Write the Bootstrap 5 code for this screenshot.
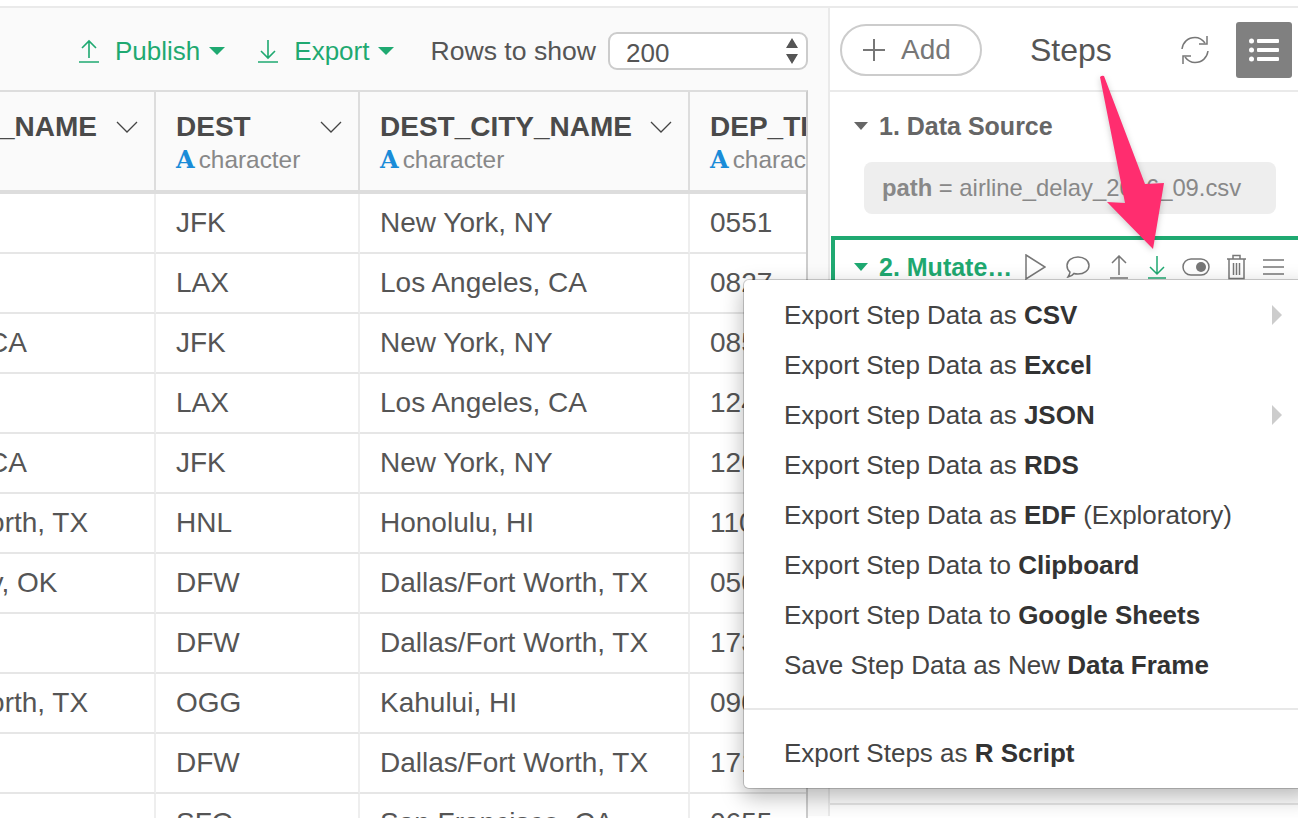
<!DOCTYPE html>
<html lang="en">
  <head>
    <meta charset="UTF-8" />
    <title>Steps - Export</title>
    <link href="https://cdn.jsdelivr.net/npm/bootstrap@5.3.0/dist/css/bootstrap.min.css" rel="stylesheet" />
    <style>
      body {
        font-family: "Liberation Sans", Arial, sans-serif;
        font-size: 26px;
        color: #555;
        background: #fff;
        height: 818px;
        overflow: hidden;
      }
      .app-shell { margin-top: 6px; border-top: 2px solid #eaeaea; height: 810px; }

      /* left pane */
      .data-pane { width: 830px; flex: none; background: #fafafa; border-right: 2px solid #eaeaea; }
      .data-toolbar { height: 82px; padding: 4px 20px 0 0; }
      .tool-link { color: #1fa971; text-decoration: none; }
      .tool-link svg { margin-right: 16px; }
      .tool-link + .tool-link { margin-left: 33px; }
      .tool-caret { width: 0; height: 0; margin-left: 9px; border-left: 8px solid transparent; border-right: 8px solid transparent; border-top: 8px solid #1fa971; }
      .rows-label { margin-left: 36px; margin-right: 12px; padding-top: 1px; font-size: 26.6px; }
      .rows-select {
        width: 200px; height: 38px; padding: 0 16px 2px;
        font-size: 26px; color: #555;
        border: 2px solid #ccc; border-radius: 9px;
        background-size: 14px 26px; background-position: right 7px center;
        background-image: url("data:image/svg+xml,%3Csvg xmlns='http://www.w3.org/2000/svg' viewBox='0 0 14 26'%3E%3Cpath fill='%23555' d='M7 0l6 10H1zM7 26L1 16h12z'/%3E%3C/svg%3E");
      }
      .grid-wrap { width: 808px; height: 728px; overflow: hidden; background: #fff; border-top: 2px solid #ddd; border-right: 2px solid #ccc; }
      .data-grid { width: 1190px; margin: 0 0 0 -200px; table-layout: fixed; border-collapse: separate; border-spacing: 0; --bs-table-bg: transparent; }
      .data-grid th {
        height: 102px; padding: 18px 16px 0 20px; vertical-align: top;
        background: #fafafa; border-bottom: 4px solid #ddd; border-right: 2px solid #ddd;
        font-size: 28px; font-weight: 700; line-height: 34px; color: #4a4a4a; white-space: nowrap;
      }
      .data-grid td {
        height: 60px; padding: 0 0 0 20px; vertical-align: middle;
        border-bottom: 2px solid #e6e6e6; border-right: 2px solid #eee;
        font-size: 28px; color: #555; white-space: nowrap; overflow: hidden;
      }
      .type-line { font-size: 24.4px; font-weight: 400; line-height: 32px; color: #888; }
      .type-glyph { font-family: "DejaVu Serif", serif; font-weight: 700; font-size: 24px; line-height: 1; color: #1a8cd8; margin-right: 4px; }

      /* right pane */
      .steps-pane { flex: 1; min-width: 0; }
      .steps-head { height: 84px; padding: 2px 0 0 10px; border-bottom: 2px solid #eaeaea; }
      .add-pill { width: 142px; height: 52px; padding: 0 8px 0 0; border: 2px solid #ccc; border-radius: 26px; color: #777; font-size: 28px; }
      .steps-title { font-size: 32px; color: #555; margin-left: 48px; margin-right: 68px; }
      .list-toggle { width: 56px; height: 56px; margin-left: 26px; border-radius: 3px; background: #808080; }
      .step-title { font-size: 25px; font-weight: 700; color: #666; line-height: 32px; }
      .step-caret { width: 0; height: 0; margin-right: 11px; border-left: 7px solid transparent; border-right: 7px solid transparent; border-top: 8px solid #666; }
      .source-step { padding: 18px 0 0 24px; height: 144px; }
      .path-box { width: 412px; height: 52px; margin: 20px 0 0 10px; padding-left: 18px; background: #eee; border-radius: 8px; font-size: 23.8px; line-height: 52px; color: #888; white-space: nowrap; }
      .active-step { margin-left: 1px; height: 545px; padding: 11px 0 0 19px; border-top: 4px solid #1fa971; border-left: 4px solid #1fa971; }
      .active-step .step-title { color: #1fa971; }
      .active-step .step-caret { border-top-color: #1fa971; }
      .step-name { width: 155px; white-space: nowrap; }
      .step-tail { margin-top: 22px; border-top: 2px solid #e6e6e6; }
      .icon-wide { margin-right: 4px; }

      /* export menu */
      .export-menu {
        left: 743px; top: 279px; width: 570px; padding: 10px 0;
        border: 1px solid rgba(0, 0, 0, 0.18); border-radius: 6px;
        box-shadow: 0 8px 22px rgba(0, 0, 0, 0.28);
        font-size: 26px;
      }
      .export-menu .dropdown-item { height: 50px; line-height: 50px; padding: 0 0 0 40px; color: #444; position: relative; }
      .export-menu .dropdown-item b { color: #333; }
      .export-menu .dropdown-divider { margin: 18px 0; border-top: 2px solid #e8e8e8; opacity: 1; }
      .sub-arrow { position: absolute; left: 528px; top: 15px; width: 0; height: 0; border-top: 10px solid transparent; border-bottom: 10px solid transparent; border-left: 10px solid #ccc; }
      .pink-arrow { position: absolute; left: 0; top: 0; pointer-events: none; filter: drop-shadow(0 2px 3px rgba(0, 0, 0, 0.2)); }
    </style>
  </head>
  <body>
    <div class="app-shell d-flex">
      <!-- data table -->
      <div class="data-pane">
        <div class="data-toolbar d-flex align-items-center justify-content-end">
          <a class="tool-link d-flex align-items-center" href="#">
            <svg width="20" height="24" viewBox="0 0 20 24" fill="none" stroke="#1fa971" stroke-width="1.6"><path d="M10 19V2M3 9l7-7 7 7M0 23h20" /></svg>
            Publish<span class="tool-caret"></span>
          </a>
          <a class="tool-link d-flex align-items-center" href="#">
            <svg width="20" height="24" viewBox="0 0 20 24" fill="none" stroke="#1fa971" stroke-width="1.6"><path d="M10 1v18M3 12l7 7 7-7M0 23h20" /></svg>
            Export<span class="tool-caret"></span>
          </a>
          <span class="rows-label">Rows to show</span>
          <select class="form-select rows-select"><option>200</option></select>
        </div>
        <div class="grid-wrap">
          <table class="table data-grid">
            <colgroup>
              <col style="width: 356px" /><col style="width: 204px" /><col style="width: 330px" /><col style="width: 300px" />
            </colgroup>
            <thead>
              <tr>
                <th><div class="d-flex align-items-center justify-content-between"><span>ORIGIN_CITY_NAME</span><svg width="22" height="12" viewBox="0 0 22 12" fill="none" stroke="#444" stroke-width="1.3"><path d="M1 1l10 10L21 1" /></svg></div><div class="type-line"><span class="type-glyph">A</span>character</div></th>
                <th><div class="d-flex align-items-center justify-content-between"><span>DEST</span><svg width="22" height="12" viewBox="0 0 22 12" fill="none" stroke="#444" stroke-width="1.3"><path d="M1 1l10 10L21 1" /></svg></div><div class="type-line"><span class="type-glyph">A</span>character</div></th>
                <th><div class="d-flex align-items-center justify-content-between"><span>DEST_CITY_NAME</span><svg width="22" height="12" viewBox="0 0 22 12" fill="none" stroke="#444" stroke-width="1.3"><path d="M1 1l10 10L21 1" /></svg></div><div class="type-line"><span class="type-glyph">A</span>character</div></th>
                <th><div>DEP_TIME</div><div class="type-line"><span class="type-glyph">A</span>character</div></th>
              </tr>
            </thead>
            <tbody>
              <tr><td>Chicago, IL</td><td>JFK</td><td>New York, NY</td><td>0551</td></tr>
              <tr><td>New York, NY</td><td>LAX</td><td>Los Angeles, CA</td><td>0827</td></tr>
              <tr><td>Los Angeles, CA</td><td>JFK</td><td>New York, NY</td><td>0855</td></tr>
              <tr><td>New York, NY</td><td>LAX</td><td>Los Angeles, CA</td><td>1240</td></tr>
              <tr><td>Los Angeles, CA</td><td>JFK</td><td>New York, NY</td><td>1205</td></tr>
              <tr><td>Dallas/Fort Worth, TX</td><td>HNL</td><td>Honolulu, HI</td><td>1100</td></tr>
              <tr><td>Oklahoma City, OK</td><td>DFW</td><td>Dallas/Fort Worth, TX</td><td>0505</td></tr>
              <tr><td>Kahului, HI</td><td>DFW</td><td>Dallas/Fort Worth, TX</td><td>1730</td></tr>
              <tr><td>Dallas/Fort Worth, TX</td><td>OGG</td><td>Kahului, HI</td><td>0900</td></tr>
              <tr><td>Honolulu, HI</td><td>DFW</td><td>Dallas/Fort Worth, TX</td><td>1710</td></tr>
              <tr><td>Kahului, HI</td><td>SFO</td><td>San Francisco, CA</td><td>0655</td></tr>
            </tbody>
          </table>
        </div>
      </div>

      <!-- steps panel -->
      <div class="steps-pane">
        <div class="steps-head d-flex align-items-center">
          <div class="add-pill d-flex align-items-center justify-content-center gap-3">
            <svg width="22" height="22" viewBox="0 0 22 22" stroke="#777" stroke-width="2"><path d="M11 0v22M0 11h22" /></svg>
            <span>Add</span>
          </div>
          <span class="steps-title">Steps</span>
          <svg width="30" height="30" viewBox="0 0 30 30" fill="none" stroke="#777" stroke-width="1.5"><path d="M2 14C3 7 8 2.500 15 2.500c4 0 7 1.500 10 5.500M28 16c-1 7-6 11.500-13 11.500-4 0-7-1.500-10-5.500" /><path d="M27 1v8h-8M3 29v-8h8" /></svg>
          <div class="list-toggle d-flex align-items-center justify-content-center">
            <svg width="30" height="24" viewBox="0 0 30 24" fill="#fff"><circle cx="2.500" cy="3" r="2.500" /><circle cx="2.500" cy="12" r="2.500" /><circle cx="2.500" cy="21" r="2.500" /><rect x="8" y="1" width="22" height="4" rx="1" /><rect x="8" y="10" width="22" height="4" rx="1" /><rect x="8" y="19" width="22" height="4" rx="1" /></svg>
          </div>
        </div>

        <div class="source-step">
          <div class="step-title d-flex align-items-center"><span class="step-caret"></span>1. Data Source</div>
          <div class="path-box"><b>path</b> = airline_delay_2016_09.csv</div>
        </div>

        <div class="active-step">
          <div class="d-flex align-items-center gap-3">
            <div class="step-title d-flex align-items-center step-name"><span class="step-caret"></span>2. Mutate…</div>
            <svg class="icon-wide" width="21" height="26" viewBox="0 0 21 26" fill="none" stroke="#777" stroke-width="1.5"><path d="M1 1l19 12L1 25z" /></svg>
            <svg class="icon-wide" width="24" height="22" viewBox="0 0 24 22" fill="none" stroke="#777" stroke-width="1.5"><path d="M12 1c6 0 11 3.500 11 8.500S18 18 12 18c-1.500 0-2.500 0-4-.5C6.500 19.500 4.500 20.500 2 21c1-1.500 1.800-3 2-5C2 14.500 1 12 1 9.500 1 4.500 6 1 12 1z" /></svg>
            <svg class="icon-wide" width="18" height="24" viewBox="0 0 18 24" fill="none" stroke="#777" stroke-width="1.5"><path d="M9 20V2M2 8l7-7 7 7M0 23h18" /></svg>
            <svg width="18" height="24" viewBox="0 0 18 24" fill="none" stroke="#1fa971" stroke-width="1.5"><path d="M9 1v18M2 12l7 7 7-7M0 23h18" /></svg>
            <svg width="28" height="18" viewBox="0 0 28 18" fill="none" stroke="#777" stroke-width="1.5"><rect x="1" y="1" width="26" height="16" rx="8" /><circle cx="19" cy="9" r="5" fill="#777" stroke="none" /></svg>
            <svg width="21" height="26" viewBox="0 0 21 26" fill="none" stroke="#777" stroke-width="1.5"><path d="M1 5h19M7 5V1.500h7V5M3 5v19.500h15V5M7.500 9v12M10.500 9v12M13.500 9v12" /></svg>
            <svg width="21" height="18" viewBox="0 0 21 18" stroke="#777" stroke-width="1.5"><path d="M0 2h21M0 9h21M0 16h21" /></svg>
          </div>
        </div>
        <div class="step-tail"></div>
      </div>
    </div>

    <!-- export dropdown, open -->
    <ul class="dropdown-menu show export-menu">
      <li><a class="dropdown-item" href="#">Export Step Data as <b>CSV</b><span class="sub-arrow"></span></a></li>
      <li><a class="dropdown-item" href="#">Export Step Data as <b>Excel</b></a></li>
      <li><a class="dropdown-item" href="#">Export Step Data as <b>JSON</b><span class="sub-arrow"></span></a></li>
      <li><a class="dropdown-item" href="#">Export Step Data as <b>RDS</b></a></li>
      <li><a class="dropdown-item" href="#">Export Step Data as <b>EDF</b> (Exploratory)</a></li>
      <li><a class="dropdown-item" href="#">Export Step Data to <b>Clipboard</b></a></li>
      <li><a class="dropdown-item" href="#">Export Step Data to <b>Google Sheets</b></a></li>
      <li><a class="dropdown-item" href="#">Save Step Data as New <b>Data Frame</b></a></li>
      <li><hr class="dropdown-divider" /></li>
      <li><a class="dropdown-item" href="#">Export Steps as <b>R Script</b></a></li>
    </ul>

    <!-- annotation arrow drawn on top of the screenshot -->
    <svg class="pink-arrow" width="1298" height="818" viewBox="0 0 1298 818">
      <path fill="#ff2d6f" d="M1100 77q2-2 4-1L1145 184 1164 183 1153 249 1107 202 1125 203z" />
    </svg>

    <script src="https://cdn.jsdelivr.net/npm/bootstrap@5.3.0/dist/js/bootstrap.bundle.min.js"></script>
  </body>
</html>
